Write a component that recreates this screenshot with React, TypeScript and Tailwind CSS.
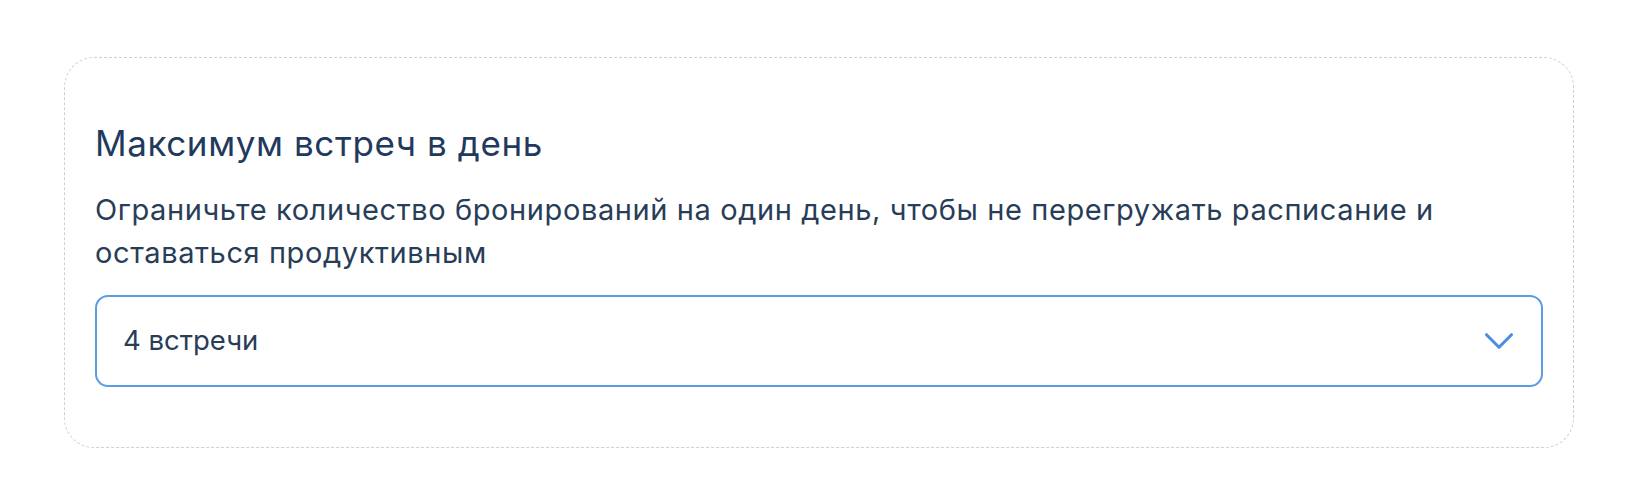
import { ChevronDown } from "lucide-react";

export default function App() {
  return (
    <div className="min-h-[504px] w-full bg-white px-[64px] pt-[57px] font-['Inter',sans-serif]">
      {/* Card */}
      <div className="rounded-[30px] border-[1.5px] border-dashed border-[#cdd1d7] pl-[30px] pr-[30px] pt-[64px] pb-[60px]">
        <h2 className="text-[35px] leading-[42px] font-normal tracking-[0.6px] text-[#1f3a5c]">
          Максимум встреч в день
        </h2>
        <p className="mt-[24px] text-[29px] leading-[43px] tracking-[0.6px] text-[#283d57]">
          Ограничьте количество бронирований на один день, чтобы не перегружать расписание и
          <br />
          оставаться продуктивным
        </p>

        {/* Select */}
        <button className="mt-[21px] flex h-[92px] w-full items-center justify-between rounded-[13px] border-2 border-[#5a9de6] bg-white pl-[26px] pr-[17px] text-left">
          <span className="text-[27.5px] tracking-[0px] text-[#283d57]">4 встречи</span>
          <ChevronDown className="h-[50px] w-[50px] text-[#4a8fdf]" strokeWidth={1.5} />
        </button>
      </div>
    </div>
  );
}
